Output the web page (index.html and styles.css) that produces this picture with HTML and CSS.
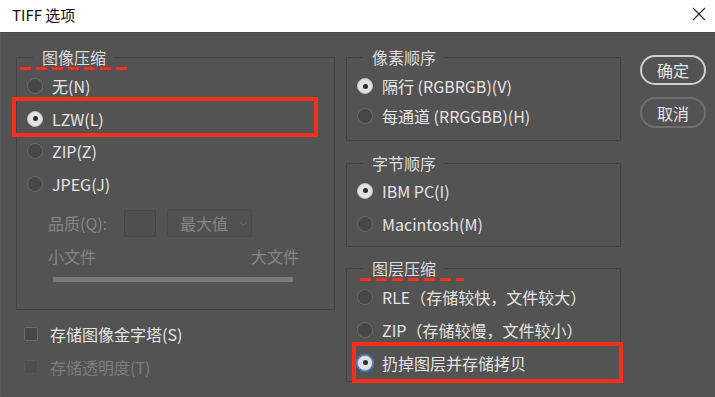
FILE: index.html
```html
<!DOCTYPE html>
<html lang="zh-CN">
<head>
  <meta charset="UTF-8">
  <title>TIFF 选项</title>
  <link rel="stylesheet" href="styles.css">
</head>
<body>
  <div class="dialog">
    <div class="titlebar">
      <span class="title">TIFF 选项</span>
      <svg class="close" width="14" height="14" viewBox="0 0 14 14">
        <path d="M1 1L13 13M13 1L1 13" stroke="#222" stroke-width="1.1" fill="none"/>
      </svg>
    </div>
    <div class="panel">
      <div class="col-left">
        <fieldset class="group group-image">
          <legend class="mark">图像压缩</legend>
          <div class="options">
            <div class="radio-row"><span class="radio"></span>无(N)</div>
            <div class="radio-row"><span class="radio on"></span>LZW(L)<span class="box box-lzw"></span></div>
            <div class="radio-row"><span class="radio"></span>ZIP(Z)</div>
            <div class="radio-row"><span class="radio"></span>JPEG(J)</div>
          </div>
          <div class="quality">
            <span class="quality-label">品质(Q):</span>
            <span class="field"></span>
            <span class="select">最大值
              <svg class="chevron" width="9" height="6" viewBox="0 0 9 6">
                <path d="M1 1L4.5 4.5L8 1" stroke="#6a6a6a" stroke-width="1" fill="none"/>
              </svg>
            </span>
          </div>
          <div class="sizes"><span>小文件</span><span>大文件</span></div>
          <div class="slider"></div>
        </fieldset>
        <div class="checks">
          <div class="check-row"><span class="check"></span>存储图像金字塔(S)</div>
          <div class="check-row disabled"><span class="check"></span>存储透明度(T)</div>
        </div>
      </div>

      <div class="col-right">
        <fieldset class="group group-pixel">
          <legend>像素顺序</legend>
          <div class="options">
            <div class="radio-row"><span class="radio on"></span>隔行 (RGBRGB)(V)</div>
            <div class="radio-row"><span class="radio"></span>每通道 (RRGGBB)(H)</div>
          </div>
        </fieldset>
        <fieldset class="group group-byte">
          <legend>字节顺序</legend>
          <div class="options">
            <div class="radio-row"><span class="radio on"></span>IBM PC(I)</div>
            <div class="radio-row"><span class="radio"></span>Macintosh(M)</div>
          </div>
        </fieldset>
        <fieldset class="group group-layer">
          <legend class="mark">图层压缩</legend>
          <div class="options">
            <div class="radio-row"><span class="radio"></span>RLE（存储较快，文件较大）</div>
            <div class="radio-row"><span class="radio"></span>ZIP（存储较慢，文件较小）</div>
            <div class="radio-row"><span class="radio on focus"></span>扔掉图层并存储拷贝<span class="box box-discard"></span></div>
          </div>
        </fieldset>
      </div>

      <div class="buttons">
        <div class="btn btn-default">确定</div>
        <div class="btn">取消</div>
      </div>
    </div>
  </div>
</body>
</html>
```

FILE: styles.css
```css
body {
  margin: 0;
  padding: 0;
  background-color: #535353;
  font-family: "Noto Sans CJK SC", "Microsoft YaHei", sans-serif;
  font-size: 16px;
  color: #e4e4e4;
}
.dialog {
  width: 715px;
  height: 397px;
  overflow: hidden;
}
.titlebar {
  height: 33px;
  background-color: #fff;
  display: flex;
  align-items: center;
  justify-content: space-between;
  padding: 0 9px 0 12px;
  box-sizing: border-box;
}
.title {
  font-size: 15px;
  color: #111;
  line-height: 20px;
  margin-top: -3px;
}
.close {
  margin-top: -5px;
}
.panel {
  height: 364px;
  box-sizing: border-box;
  display: flex;
  align-items: flex-start;
  padding: 14px 0 0 16px;
  border-top: 1px solid #474747;
  border-left: 1px solid #5c5c5c;
  margin-top: -1px;
}
.panel > .col-left {
  margin-left: -1px;
}

/* group boxes */
.group {
  margin: 0;
  padding: 0;
  min-width: 0;
  border: 1px solid #434343;
  box-sizing: border-box;
}
.group legend {
  margin-left: 16px;
  padding: 0 8px 0 9px;
  line-height: 20px;
  font-size: 16px;
  color: #dcdcdc;
  position: relative;
}
.mark::after {
  content: "";
  position: absolute;
  left: -13px;
  top: 20px;
  width: 109px;
  height: 3px;
  background: repeating-linear-gradient(90deg, #f2301c 0 11px, transparent 11px 16px);
}
.group-layer .mark::after {
  left: -3px;
  width: 104px;
}

.col-left {
  width: 319px;
}
.col-right {
  width: 275px;
  margin-left: 11px;
}

.options {
  padding-top: 3px;
}
.radio-row {
  height: 32.5px;
  display: flex;
  align-items: center;
  gap: 9px;
  padding-left: 10px;
  position: relative;
  white-space: nowrap;
}
.group-pixel .options {
  padding: 4px 0 9px;
}
.group-pixel .radio-row {
  height: 30px;
}
.group-byte {
  margin-top: 12px;
}
.group-byte .options {
  padding: 1px 0 6px;
}
.group-byte .radio-row,
.group-layer .radio-row {
  height: 33px;
}
.group-layer {
  margin-top: 11px;
}
.group-layer .options {
  padding: 2px 0 2px;
}

.radio {
  width: 14px;
  height: 14px;
  border-radius: 50%;
  border: 1px solid #6b6b6b;
  background-color: #474747;
  flex: none;
  position: relative;
}
.radio.on {
  background-color: #e2e2e2;
  border-color: #bdbdbd;
}
.radio.on::after {
  content: "";
  position: absolute;
  left: 4.5px;
  top: 4.5px;
  width: 5px;
  height: 5px;
  border-radius: 50%;
  background-color: #2c2c2c;
}
.radio.focus {
  border-color: #5d8fd8;
  box-shadow: 0 0 0 1px #4f7fc4;
}

/* red annotation boxes */
.box {
  position: absolute;
  border: 4px solid #f2301c;
  box-sizing: border-box;
  z-index: 2;
}
.box-lzw {
  left: -5px;
  top: -5.5px;
  width: 306px;
  height: 40px;
}
.box-discard {
  left: 5px;
  top: -4px;
  width: 271px;
  height: 41px;
}

/* quality */
.quality {
  display: flex;
  align-items: center;
  height: 28px;
  margin-top: 9px;
  padding-left: 31px;
  color: #858585;
}
.quality-label {
  width: 76px;
}
.field {
  width: 32px;
  height: 27px;
  box-sizing: border-box;
  border: 1px solid #474747;
  background-color: #4f4f4f;
}
.select {
  margin-left: 11px;
  width: 85px;
  height: 28px;
  box-sizing: border-box;
  border: 1px solid #4a4a4a;
  background-color: #515151;
  border-radius: 2px;
  display: flex;
  align-items: center;
  padding-left: 12px;
  color: #858585;
}
.chevron {
  margin-left: 11px;
  margin-top: 2px;
}
.sizes {
  display: flex;
  justify-content: space-between;
  line-height: 20px;
  margin-top: 9px;
  padding: 0 35px 0 31px;
  color: #858585;
}
.slider {
  margin: 11px 0 27px 36px;
  width: 240px;
  height: 5px;
  background-color: #7b7b7b;
  border-radius: 1px;
}

/* checkboxes */
.checks {
  margin-top: 7px;
}
.check-row {
  height: 33px;
  display: flex;
  align-items: center;
  gap: 12px;
  padding-left: 8px;
}
.check {
  width: 14px;
  height: 14px;
  box-sizing: border-box;
  border: 1px solid #6b6b6b;
  background-color: #474747;
  border-radius: 2px;
}
.check-row.disabled {
  color: #7d7d7d;
}
.check-row.disabled .check {
  border-color: #575757;
  background-color: #4e4e4e;
}

/* buttons */
.buttons {
  margin-left: 19px;
  padding-top: 8px;
  display: flex;
  flex-direction: column;
  gap: 12px;
}
.btn {
  width: 66px;
  height: 31px;
  box-sizing: border-box;
  border: 2px solid #6f6f6f;
  border-radius: 16px;
  display: flex;
  align-items: center;
  justify-content: center;
  color: #e4e4e4;
  font-size: 16px;
}
.btn-default {
  height: 30px;
  border-color: #cfcfcf;
}
```
